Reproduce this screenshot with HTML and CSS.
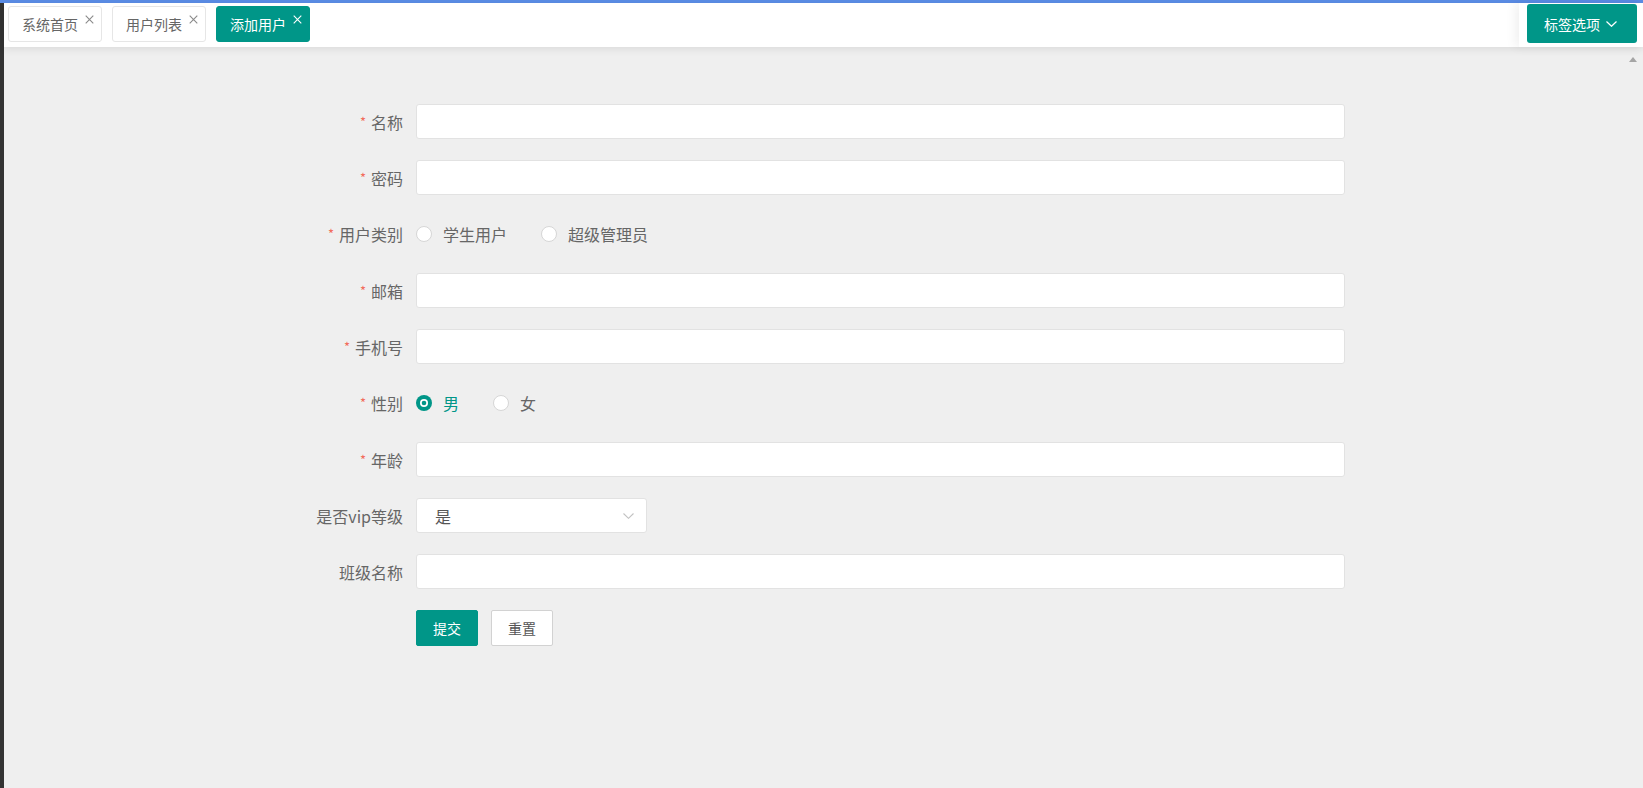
FILE: index.html
```html
<!DOCTYPE html>
<html lang="zh-CN">
<head>
<meta charset="utf-8">
<title>添加用户</title>
<link rel="stylesheet" href="styles.css">
</head>
<body>
<div class="topline"></div>
<div class="frame">
  <aside class="side"></aside>
  <main class="content">
    <div class="tabbar">
      <ul class="tabs">
        <li class="tab"><span class="tab-title">系统首页</span><svg class="tab-close" viewBox="0 0 9 9"><path d="M0.7 0.7L8.3 8.3M8.3 0.7L0.7 8.3"/></svg></li>
        <li class="tab"><span class="tab-title">用户列表</span><svg class="tab-close" viewBox="0 0 9 9"><path d="M0.7 0.7L8.3 8.3M8.3 0.7L0.7 8.3"/></svg></li>
        <li class="tab tab-active"><span class="tab-title">添加用户</span><svg class="tab-close" viewBox="0 0 9 9"><path d="M0.7 0.7L8.3 8.3M8.3 0.7L0.7 8.3"/></svg></li>
      </ul>
      <div class="tab-menu">
        <button class="tab-menu-btn" type="button">标签选项<svg class="tab-menu-arrow" viewBox="0 0 11 6"><path d="M0.5 0.5L5.5 5.3L10.5 0.5"/></svg></button>
      </div>
    </div>
    <div class="page">
      <span class="scroll-up"></span>
      <form class="form">
        <div class="form-item">
          <label class="form-label"><i class="req">*</i>名称</label>
          <input class="input" type="text">
        </div>
        <div class="form-item">
          <label class="form-label"><i class="req">*</i>密码</label>
          <input class="input" type="password">
        </div>
        <div class="form-item radio-item">
          <label class="form-label"><i class="req">*</i>用户类别</label>
          <div class="radios">
            <span class="radio"><span class="radio-icon"></span>学生用户</span>
            <span class="radio"><span class="radio-icon"></span>超级管理员</span>
          </div>
        </div>
        <div class="form-item">
          <label class="form-label"><i class="req">*</i>邮箱</label>
          <input class="input" type="text">
        </div>
        <div class="form-item">
          <label class="form-label"><i class="req">*</i>手机号</label>
          <input class="input" type="text">
        </div>
        <div class="form-item radio-item">
          <label class="form-label"><i class="req">*</i>性别</label>
          <div class="radios">
            <span class="radio radio-checked"><svg class="radio-svg" viewBox="0 0 16 16"><circle cx="8" cy="8" r="8" fill="#009688"/><circle cx="8" cy="8" r="4" fill="#fff"/><circle cx="8" cy="8" r="2.3" fill="#009688"/></svg>男</span>
            <span class="radio"><span class="radio-icon"></span>女</span>
          </div>
        </div>
        <div class="form-item">
          <label class="form-label"><i class="req">*</i>年龄</label>
          <input class="input" type="text">
        </div>
        <div class="form-item">
          <label class="form-label">是否vip等级</label>
          <div class="select">
            <span class="select-value">是</span>
            <svg class="select-arrow" viewBox="0 0 11 6"><path d="M0.5 0.5L5.5 5.3L10.5 0.5"/></svg>
          </div>
        </div>
        <div class="form-item">
          <label class="form-label">班级名称</label>
          <input class="input" type="text">
        </div>
        <div class="form-actions">
          <button class="btn btn-primary" type="button">提交</button>
          <button class="btn btn-default" type="button">重置</button>
        </div>
      </form>
    </div>
  </main>
</div>
</body>
</html>
```

FILE: styles.css
```css
* { box-sizing: border-box; }
html, body { margin: 0; padding: 0; height: 100%; }
body {
  font-family: "Microsoft YaHei", "Noto Sans CJK SC", sans-serif;
  background: #efefef;
  color: #666;
  overflow: hidden;
}
.topline { height: 3px; background: #5b8de6; }
.frame { display: flex; height: 785px; }
.side { width: 4px; flex: none; background: #333; }
.content { flex: 1; display: flex; flex-direction: column; min-width: 0; }

.tabbar {
  height: 44px;
  flex: none;
  background: #fff;
  display: flex;
  justify-content: space-between;
  position: relative;
  z-index: 1;
  box-shadow: 0 2px 8px rgba(0, 0, 0, 0.09);
}
.tabs {
  list-style: none;
  margin: 0;
  padding: 3px 0 0 4px;
  display: flex;
  gap: 10px;
  align-items: flex-start;
}
.tab {
  height: 36px;
  border: 1px solid #e6e6e6;
  border-radius: 3px;
  display: flex;
  align-items: center;
  padding: 0 7px 0 13px;
  font-size: 14px;
  line-height: 20px;
  color: #666;
  background: #fff;
}
.tab-close {
  width: 9px;
  height: 9px;
  margin-left: 7px;
  align-self: flex-start;
  margin-top: 8px;
  fill: none;
  stroke: #8a8a8a;
  stroke-width: 1.1;
}
.tab-active { background: #009688; border-color: #009688; color: #fff; }
.tab-active .tab-close { stroke: #fff; }

.tab-menu {
  width: 124px;
  flex: none;
  background: #fff;
  padding: 1px 0 0 8px;
  box-shadow: -4px 0 10px rgba(0, 0, 0, 0.06);
}
.tab-menu-btn {
  width: 110px;
  height: 39px;
  border: none;
  border-radius: 3px;
  background: #009688;
  color: #fff;
  font-family: inherit;
  font-size: 14px;
  line-height: 20px;
  display: flex;
  align-items: center;
  padding: 0 0 0 17px;
}
.tab-menu-arrow {
  width: 11px;
  height: 6px;
  margin-left: 6px;
  fill: none;
  stroke: #fff;
  stroke-width: 1.2;
}

.page { flex: 1; position: relative; padding-top: 57px; }
.scroll-up {
  position: absolute;
  right: 6px;
  top: 10px;
  width: 0;
  height: 0;
  border-left: 4.5px solid transparent;
  border-right: 4.5px solid transparent;
  border-bottom: 5px solid #a5a5a5;
}

.form { margin-left: 287px; }
.form-item {
  display: flex;
  align-items: center;
  height: 35px;
  margin-bottom: 21px;
}
.radio-item { height: 36px; }
.form-label {
  width: 125px;
  flex: none;
  padding-right: 13px;
  text-align: right;
  font-size: 16px;
  line-height: 20px;
  color: #666;
}
.req {
  font-style: normal;
  color: #f26b5b;
  font-size: 13px;
  margin-right: 5px;
  vertical-align: 2px;
}
.input {
  width: 929px;
  height: 35px;
  border: 1px solid #e2e2e2;
  border-radius: 3px;
  background: #fff;
  padding: 0 10px;
  font-family: inherit;
  font-size: 16px;
  outline: none;
}
.radios { display: flex; align-items: center; }
.radio {
  display: inline-flex;
  align-items: center;
  margin-right: 34px;
  font-size: 16px;
  line-height: 20px;
  color: #666;
}
.radio-icon {
  width: 16px;
  height: 16px;
  border: 1px solid #d6d6d6;
  border-radius: 50%;
  background: #fff;
  margin-right: 11px;
}
.radio-svg { width: 16px; height: 16px; margin-right: 11px; }
.radio-checked { color: #009688; }

.select {
  width: 231px;
  height: 35px;
  border: 1px solid #e2e2e2;
  border-radius: 3px;
  background: #fff;
  display: flex;
  align-items: center;
  justify-content: space-between;
  padding: 0 12px 0 18px;
  font-size: 16px;
  line-height: 20px;
  color: #555;
}
.select-arrow {
  width: 11px;
  height: 6px;
  fill: none;
  stroke: #c2c2c2;
  stroke-width: 1.1;
}

.form-actions {
  display: flex;
  gap: 13px;
  margin-left: 125px;
  margin-top: 2px;
}
.btn {
  width: 62px;
  height: 36px;
  border-radius: 2px;
  font-family: inherit;
  font-size: 14px;
  line-height: 20px;
  padding: 0;
}
.btn-primary { background: #009688; border: 1px solid #009688; color: #fff; }
.btn-default { background: #fff; border: 1px solid #d2d2d2; color: #555; }
```
